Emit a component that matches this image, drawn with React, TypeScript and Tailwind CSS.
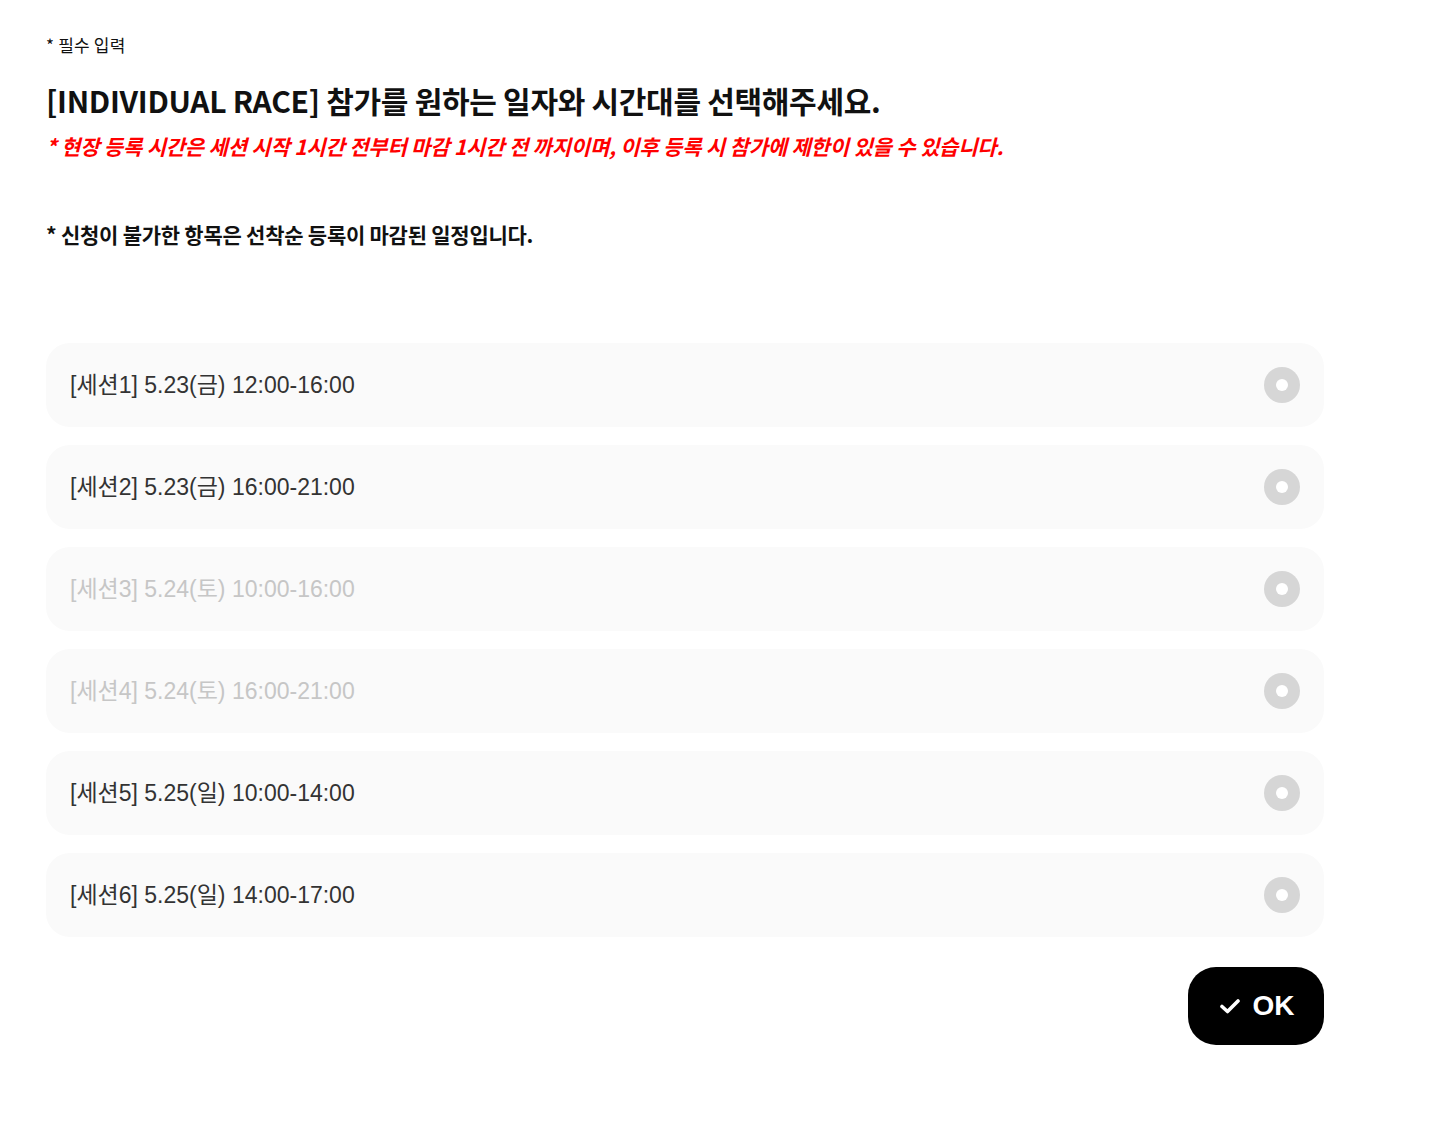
import React from "react";

const sessions = [
  { label: "[세션1] 5.23(금) 12:00-16:00", disabled: false },
  { label: "[세션2] 5.23(금) 16:00-21:00", disabled: false },
  { label: "[세션3] 5.24(토) 10:00-16:00", disabled: true },
  { label: "[세션4] 5.24(토) 16:00-21:00", disabled: true },
  { label: "[세션5] 5.25(일) 10:00-14:00", disabled: false },
  { label: "[세션6] 5.25(일) 14:00-17:00", disabled: false },
];

export default function App() {
  return (
    <div className="min-h-[1126px] bg-white pl-[46px] pt-[33px] pb-[80px]" style={{ fontFamily: '"Noto Sans CJK KR", sans-serif' }}>
      <div className="w-[1278px]">
        <div className="text-[17px] leading-[24px] tracking-[0.2px] text-[#111]">* 필수 입력</div>
        <h1 className="mt-[23px] text-[30px] leading-[40px] font-bold text-[#111] tracking-[-0.3px]">
          [INDIVIDUAL RACE] 참가를 원하는 일자와 시간대를 선택해주세요.
        </h1>
        <p className="mt-[12px] text-[21px] leading-[28px] font-bold italic text-[#ff0000] tracking-[-0.2px]">
          * 현장 등록 시간은 세션 시작 1시간 전부터 마감 1시간 전 까지이며, 이후 등록 시 참가에 제한이 있을 수 있습니다.
        </p>
        <p className="mt-[60px] text-[21px] leading-[28px] font-bold text-[#111] tracking-[-0.25px]">
          * 신청이 불가한 항목은 선착순 등록이 마감된 일정입니다.
        </p>
        <div className="mt-[95px] flex flex-col gap-[18px]">
          {sessions.map((s) => (
            <div
              key={s.label}
              className="flex h-[84px] items-center justify-between rounded-[24px] bg-[#fafafa] pl-[24px] pr-[24px]"
            >
              <span
                className={`text-[23px] ${s.disabled ? "text-[#c6c6c6]" : "text-[#333]"}`}
                style={{ fontFamily: '"Liberation Sans", "Noto Sans CJK KR", sans-serif' }}
              >
                {s.label}
              </span>
              <span className="flex h-[36px] w-[36px] items-center justify-center rounded-full bg-[#d6d6d6]">
                <span className="h-[12px] w-[12px] rounded-full bg-white" />
              </span>
            </div>
          ))}
        </div>
        <div className="mt-[30px] flex justify-end">
          <button
            className="flex h-[78px] w-[136px] items-center justify-center gap-[13px] rounded-[28px] bg-black pl-[2px] text-white"
            style={{ fontFamily: '"Liberation Sans", Arial, sans-serif' }}
          >
            <svg width="20" height="16" viewBox="0 0 20 16" fill="none">
              <path d="M2 8.5 L7.5 13.5 L18 3" stroke="white" strokeWidth="3.6" strokeLinecap="round" strokeLinejoin="round" />
            </svg>
            <span className="text-[28px] font-bold leading-none">OK</span>
          </button>
        </div>
      </div>
    </div>
  );
}
